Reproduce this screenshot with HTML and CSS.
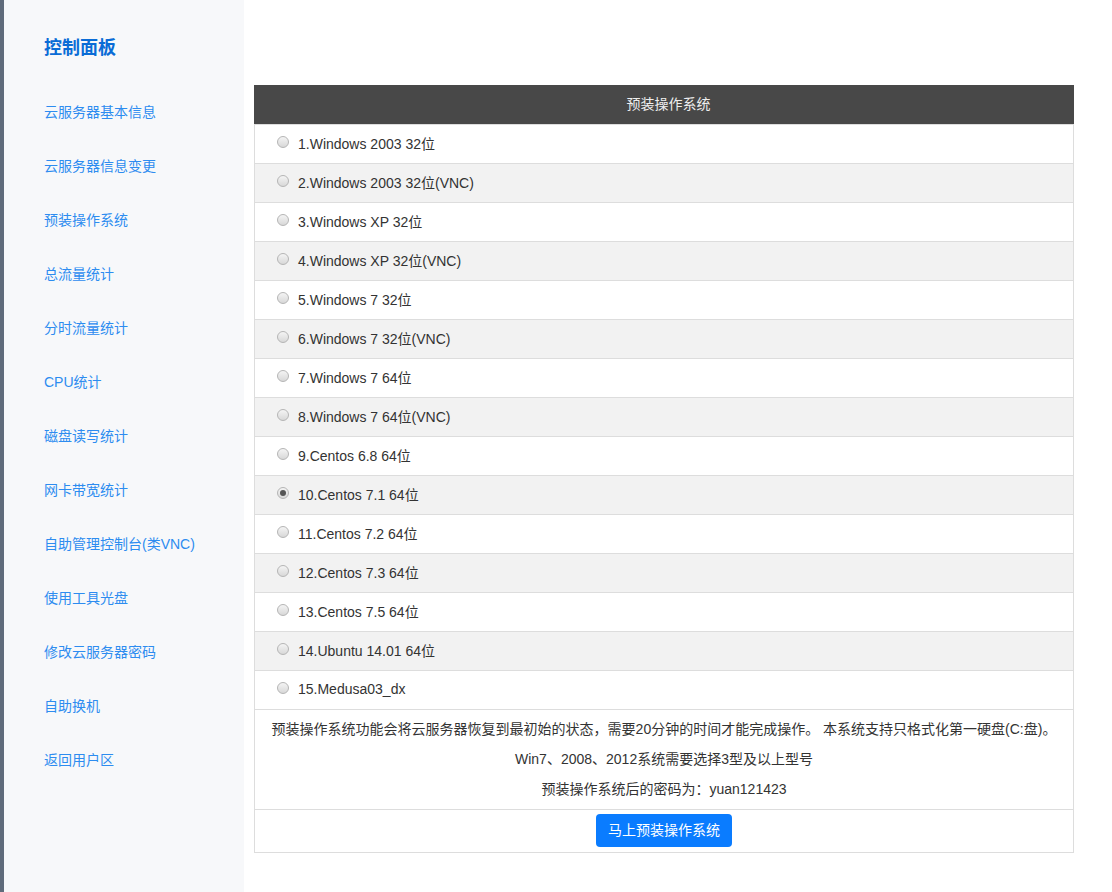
FILE: index.html
```html
<!DOCTYPE html>
<html lang="zh-CN">
<head>
<meta charset="utf-8">
<title>控制面板</title>
<link rel="stylesheet" href="styles.css">
</head>
<body>
<div class="page">
  <aside class="sidebar">
    <h1 class="brand">控制面板</h1>
    <nav class="nav">
      <a class="nav-item">云服务器基本信息</a>
      <a class="nav-item">云服务器信息变更</a>
      <a class="nav-item">预装操作系统</a>
      <a class="nav-item">总流量统计</a>
      <a class="nav-item">分时流量统计</a>
      <a class="nav-item">CPU统计</a>
      <a class="nav-item">磁盘读写统计</a>
      <a class="nav-item">网卡带宽统计</a>
      <a class="nav-item">自助管理控制台(类VNC)</a>
      <a class="nav-item">使用工具光盘</a>
      <a class="nav-item">修改云服务器密码</a>
      <a class="nav-item">自助换机</a>
      <a class="nav-item">返回用户区</a>
    </nav>
  </aside>
  <main class="main">
    <div class="panel">
      <div class="panel-head">预装操作系统</div>
      <div class="row"><span class="radio"></span>1.Windows 2003 32位</div>
      <div class="row alt"><span class="radio"></span>2.Windows 2003 32位(VNC)</div>
      <div class="row"><span class="radio"></span>3.Windows XP 32位</div>
      <div class="row alt"><span class="radio"></span>4.Windows XP 32位(VNC)</div>
      <div class="row"><span class="radio"></span>5.Windows 7 32位</div>
      <div class="row alt"><span class="radio"></span>6.Windows 7 32位(VNC)</div>
      <div class="row"><span class="radio"></span>7.Windows 7 64位</div>
      <div class="row alt"><span class="radio"></span>8.Windows 7 64位(VNC)</div>
      <div class="row"><span class="radio"></span>9.Centos 6.8 64位</div>
      <div class="row alt"><span class="radio checked"></span>10.Centos 7.1 64位</div>
      <div class="row"><span class="radio"></span>11.Centos 7.2 64位</div>
      <div class="row alt"><span class="radio"></span>12.Centos 7.3 64位</div>
      <div class="row"><span class="radio"></span>13.Centos 7.5 64位</div>
      <div class="row alt"><span class="radio"></span>14.Ubuntu 14.01 64位</div>
      <div class="row"><span class="radio"></span>15.Medusa03_dx</div>
      <div class="info">
        <p>预装操作系统功能会将云服务器恢复到最初始的状态，需要20分钟的时间才能完成操作。 本系统支持只格式化第一硬盘(C:盘)。</p>
        <p>Win7、2008、2012系统需要选择3型及以上型号</p>
        <p>预装操作系统后的密码为：yuan121423</p>
      </div>
      <div class="actions">
        <button class="btn">马上预装操作系统</button>
      </div>
    </div>
  </main>
</div>
</body>
</html>
```
FILE: styles.css
```css
* { box-sizing: border-box; }
html, body { margin: 0; padding: 0; }
body {
  font-family: "Liberation Sans", "Noto Sans CJK SC", sans-serif;
  font-size: 14px;
  color: #333;
  background: #fff;
}
.page {
  display: flex;
  min-height: 892px;
}
.sidebar {
  width: 244px;
  flex: 0 0 244px;
  background: #f7f8fa;
  border-left: 4px solid #5f6b7b;
  padding: 36px 0 0 40px;
}
.brand {
  margin: 0;
  font-size: 18px;
  line-height: 24px;
  font-weight: bold;
  color: #0a6cd6;
}
.nav {
  display: flex;
  flex-direction: column;
  margin-top: 42px;
  gap: 34px;
}
.nav-item {
  display: block;
  font-size: 14px;
  line-height: 20px;
  color: #2d8cf0;
  text-decoration: none;
}
.main {
  flex: 1;
  padding: 85px 38px 0 10px;
}
.panel {
  border: 1px solid #ddd;
  border-top: 0;
}
.panel-head {
  height: 39px;
  line-height: 39px;
  background: #484848;
  color: #eee;
  text-align: center;
  font-size: 14px;
  margin: 0 -1px;
  padding-left: 9px;
}
.row {
  display: flex;
  align-items: center;
  height: 39px;
  border-top: 1px solid #ddd;
  padding-left: 22px;
  padding-bottom: 2px;
  font-size: 14px;
}
.row.alt { background: #f2f2f2; }
.radio {
  width: 12px;
  height: 12px;
  border-radius: 50%;
  border: 1px solid #b5b5b5;
  background: linear-gradient(#f4f4f4, #d8d8d8);
  margin-right: 9px;
  margin-top: -3px;
  position: relative;
  flex: 0 0 12px;
}
.radio.checked::after {
  content: "";
  position: absolute;
  left: 2px;
  top: 2px;
  width: 6px;
  height: 6px;
  border-radius: 50%;
  background: #555;
}
.info {
  border-top: 1px solid #ddd;
  padding: 9px 0 10px;
  text-align: center;
  display: flex;
  flex-direction: column;
  gap: 10px;
}
.info p {
  margin: 0;
  line-height: 20px;
  font-size: 14px;
  color: #333;
}
.actions {
  border-top: 1px solid #ddd;
  padding: 4px 0 5px;
  text-align: center;
}
.btn {
  font-family: "Liberation Sans", "Noto Sans CJK SC", sans-serif;
  font-size: 14px;
  color: #fff;
  background: #0a7cff;
  border: 0;
  border-radius: 4px;
  height: 33px;
  padding: 0 12px;
  line-height: 33px;
  cursor: pointer;
  display: inline-block;
  vertical-align: top;
}
```
